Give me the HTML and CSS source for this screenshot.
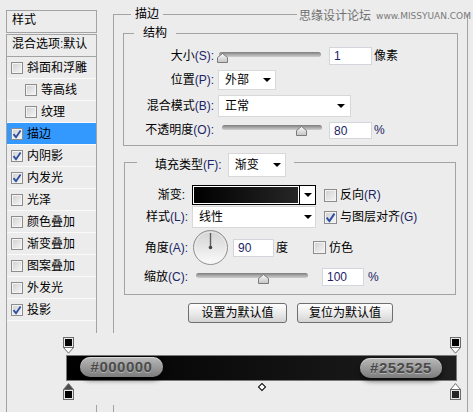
FILE: index.html
```html
<!DOCTYPE html>
<html lang="zh">
<head>
<meta charset="utf-8">
<title>图层样式 - 描边</title>
<link rel="stylesheet" href="styles.css">
</head>
<body>
<div class="app">
  <aside class="sidebar">
    <div class="side-head">样式</div>
    <ul class="side-list">
      <li class="opt">混合选项<span class="k">:</span>默认</li>
      <li><span class="cb"></span>斜面和浮雕</li>
      <li class="sub"><span class="cb"></span>等高线</li>
      <li class="sub"><span class="cb"></span>纹理</li>
      <li class="active"><span class="cb on"><svg width="10" height="10" viewBox="0 0 10 10"><path d="M1.5 5.2 L4 8.2 L8.6 1.5" fill="none" stroke="#2d4fa3" stroke-width="1.8"/></svg></span>描边</li>
      <li><span class="cb on"><svg width="10" height="10" viewBox="0 0 10 10"><path d="M1.5 5.2 L4 8.2 L8.6 1.5" fill="none" stroke="#2d4fa3" stroke-width="1.8"/></svg></span>内阴影</li>
      <li><span class="cb on"><svg width="10" height="10" viewBox="0 0 10 10"><path d="M1.5 5.2 L4 8.2 L8.6 1.5" fill="none" stroke="#2d4fa3" stroke-width="1.8"/></svg></span>内发光</li>
      <li><span class="cb"></span>光泽</li>
      <li><span class="cb"></span>颜色叠加</li>
      <li><span class="cb"></span>渐变叠加</li>
      <li><span class="cb"></span>图案叠加</li>
      <li><span class="cb"></span>外发光</li>
      <li><span class="cb on"><svg width="10" height="10" viewBox="0 0 10 10"><path d="M1.5 5.2 L4 8.2 L8.6 1.5" fill="none" stroke="#2d4fa3" stroke-width="1.8"/></svg></span>投影</li>
    </ul>
  </aside>

  <main class="main">
    <fieldset class="outer">
      <legend>描边</legend>

      <fieldset class="struct">
        <legend>结构</legend>
        <div class="row r1">
          <span class="lbl">大小<span class="k">(S):</span></span>
          <div class="slider s-size">
            <div class="track"></div>
            <svg class="thumb" style="left:-1px" width="11" height="10" viewBox="0 0 11 10"><defs><linearGradient id="tg1" x1="0" y1="0" x2="0" y2="1"><stop offset="0" stop-color="#fbfbfb"/><stop offset="1" stop-color="#c4c4c4"/></linearGradient></defs><path d="M0.5 9.5 V4.5 L5.5 0.5 L10.5 4.5 V9.5 Z" fill="url(#tg1)" stroke="#7b7b7b"/></svg>
          </div>
          <div class="num">1</div>
          <span class="unit">像素</span>
        </div>
        <div class="row r2">
          <span class="lbl">位置<span class="k">(P):</span></span>
          <div class="dd dd-pos">外部</div>
        </div>
        <div class="row r3">
          <span class="lbl">混合模式<span class="k">(B):</span></span>
          <div class="dd dd-blend">正常</div>
        </div>
        <div class="row r4">
          <span class="lbl">不透明度<span class="k">(O):</span></span>
          <div class="slider s-opacity">
            <div class="track"></div>
            <svg class="thumb" style="left:74px" width="11" height="10" viewBox="0 0 11 10"><defs><linearGradient id="tg2" x1="0" y1="0" x2="0" y2="1"><stop offset="0" stop-color="#fbfbfb"/><stop offset="1" stop-color="#c4c4c4"/></linearGradient></defs><path d="M0.5 9.5 V4.5 L5.5 0.5 L10.5 4.5 V9.5 Z" fill="url(#tg2)" stroke="#7b7b7b"/></svg>
          </div>
          <div class="num">80</div>
          <span class="unit k">%</span>
        </div>
      </fieldset>

      <fieldset class="fill">
        <legend><span class="lt">填充类型<span class="k">(F):</span></span><div class="dd dd-type">渐变</div></legend>
        <div class="row f1">
          <span class="lbl">渐变:</span>
          <div class="gswatch"><div class="gfill"></div><div class="garrow"></div></div>
          <span class="cb"></span><span class="cbl">反向<span class="k">(R)</span></span>
        </div>
        <div class="row f2">
          <span class="lbl">样式<span class="k">(L):</span></span>
          <div class="dd dd-style">线性</div>
          <span class="cb on"><svg width="11" height="11" viewBox="0 0 10 10"><path d="M1.5 5.2 L4 8.2 L8.6 1.5" fill="none" stroke="#2d4fa3" stroke-width="1.8"/></svg></span><span class="cbl">与图层对齐<span class="k">(G)</span></span>
        </div>
        <div class="row f3">
          <span class="lbl">角度<span class="k">(A):</span></span>
          <svg class="dial" width="35" height="35" viewBox="0 0 35 35"><defs><linearGradient id="dg" x1="0" y1="0" x2="0" y2="1"><stop offset="0" stop-color="#d2d2d2"/><stop offset="1" stop-color="#fbfbfb"/></linearGradient></defs><circle cx="17.5" cy="17.5" r="17" fill="url(#dg)" stroke="#8e8e8e"/><circle cx="17.5" cy="17.5" r="15.5" fill="none" stroke="#f4f4f4" stroke-opacity=".6"/><line x1="17.5" y1="17.5" x2="17.5" y2="3" stroke="#5c5c5c" stroke-width="1.4"/><circle cx="17.5" cy="17.5" r="1.8" fill="#474747"/></svg>
          <div class="num">90</div>
          <span class="unit">度</span>
          <span class="cb"></span><span class="cbl">仿色</span>
        </div>
        <div class="row f4">
          <span class="lbl">缩放<span class="k">(C):</span></span>
          <div class="slider s-scale">
            <div class="track"></div>
            <svg class="thumb" style="left:62px" width="11" height="10" viewBox="0 0 11 10"><defs><linearGradient id="tg3" x1="0" y1="0" x2="0" y2="1"><stop offset="0" stop-color="#fbfbfb"/><stop offset="1" stop-color="#c4c4c4"/></linearGradient></defs><path d="M0.5 9.5 V4.5 L5.5 0.5 L10.5 4.5 V9.5 Z" fill="url(#tg3)" stroke="#7b7b7b"/></svg>
          </div>
          <div class="num">100</div>
          <span class="unit k">%</span>
        </div>
      </fieldset>

      <div class="btns">
        <button class="btn btn-a" type="button">设置为默认值</button>
        <button class="btn btn-b" type="button">复位为默认值</button>
      </div>
    </fieldset>
  </main>
</div>

<div class="watermark"><span class="cn">思缘设计论坛</span><span class="url">www.MISSYUAN.COM</span></div>

<div class="grad-editor">
  <div class="gbar"></div>
  <svg class="stop st-l" width="11" height="17" viewBox="0 0 11 17"><path d="M0.5 10.5 L5.5 16.2 L10.5 10.5" fill="#fff" stroke="#6b6b6b"/><rect x="0.5" y="0.5" width="10" height="10" fill="#e6e6e6" stroke="#6b6b6b"/><rect x="2" y="2" width="7" height="7" fill="#000"/></svg>
  <svg class="stop st-r" width="11" height="17" viewBox="0 0 11 17"><path d="M0.5 10.5 L5.5 16.2 L10.5 10.5" fill="#fff" stroke="#6b6b6b"/><rect x="0.5" y="0.5" width="10" height="10" fill="#e6e6e6" stroke="#6b6b6b"/><rect x="2" y="2" width="7" height="7" fill="#000"/></svg>
  <svg class="stop sb-l" width="11" height="17" viewBox="0 0 11 17"><path d="M0.5 6.5 L5.5 0.6 L10.5 6.5 Z" fill="#4a4a4a" stroke="#6b6b6b"/><rect x="0.5" y="6.5" width="10" height="10" fill="#e6e6e6" stroke="#6b6b6b"/><rect x="2" y="8" width="7" height="7" fill="#000"/></svg>
  <svg class="stop sb-r" width="11" height="17" viewBox="0 0 11 17"><path d="M0.5 6.5 L5.5 0.6 L10.5 6.5 Z" fill="#fff" stroke="#6b6b6b"/><rect x="0.5" y="6.5" width="10" height="10" fill="#e6e6e6" stroke="#6b6b6b"/><rect x="2" y="8" width="7" height="7" fill="#252525"/></svg>
  <div class="pill pill-l">#000000</div>
  <div class="pill pill-r">#252525</div>
  <div class="mid"></div>
</div>
</body>
</html>
```

FILE: styles.css
```css
* { box-sizing: border-box; }
html, body { margin: 0; padding: 0; }
body {
  width: 473px;
  height: 412px;
  overflow: hidden;
  position: relative;
  background: #ececec;
  color: #000;
  font: 12px/14px "Liberation Sans", "Noto Sans CJK SC", sans-serif;
}
.k { color: #1b2466; }

.app { display: flex; align-items: flex-start; }

/* ---------- sidebar ---------- */
.sidebar { flex: none; width: 91px; margin: 10px 0 0 6px; }
.side-head {
  height: 23px;
  border: 1px solid #a3a3a3;
  padding: 2px 0 0 5px;
}
.side-list {
  list-style: none;
  margin: 1px 0 0;
  padding: 0;
  height: 378px;
  border: 1px solid #a3a3a3;
  border-bottom: 0;
}
.side-list li {
  display: flex;
  align-items: center;
  height: 22px;
  padding-left: 4px;
  border-bottom: 1px solid #fafafa;
  white-space: nowrap;
}
.side-list li.opt { padding: 0 0 3px 5px; border-bottom-color: #a3a3a3; }
.side-list li.sub { padding-left: 18px; }
.side-list li.active { background: #3399ff; }
.side-list .cb { margin-right: 4px; }

.cb {
  flex: none;
  display: inline-flex;
  align-items: center;
  justify-content: center;
  width: 12px;
  height: 12px;
  border: 1px solid #8d8d8d;
  background: linear-gradient(135deg, #cfcfcf, #f7f7f7);
  box-shadow: inset 0 0 0 1px #f3f3f3;
}
.cb svg { display: block; }

/* ---------- main ---------- */
.main { flex: none; width: 355px; margin: 7px 0 0 16px; }
fieldset { margin: 0; padding: 0; min-width: 0; border: 1px solid #a3a3a3; }
legend { padding: 0; line-height: 14px; }
.outer { height: 405px; border-bottom: 0; }
.outer > legend { margin-left: 17px; padding: 0 4px; }

.struct { margin: 5px 9px 0; padding: 0 0 6px; }
.struct > legend { margin-left: 10px; padding: 0 9px; }

.row { display: flex; align-items: center; white-space: nowrap; }
.lbl { flex: none; text-align: right; }
.struct .lbl { width: 90px; margin-right: 4px; }
.r1 { margin-top: 6px; height: 19px; }
.r2 { margin-top: 5px; height: 20px; }
.r3 { margin-top: 5px; height: 22px; }
.r4 { margin-top: 4px; height: 18px; }

.slider { position: relative; flex: none; align-self: stretch; }
.track {
  height: 5px;
  border-radius: 3px;
  background: linear-gradient(#7c7c7c, #a4a4a4 45%, #cecece);
}
.thumb { position: absolute; display: block; }
.s-size { width: 104px; padding: 6px 1px 0; }
.s-size .thumb { top: 7px; }
.s-opacity { width: 100px; margin-left: 4px; padding-top: 4px; }
.s-opacity .thumb { top: 5px; }
.s-scale { width: 112px; margin-left: 4px; padding-top: 5px; }
.s-scale .thumb { top: 6px; }

.num {
  flex: none;
  width: 43px;
  height: 18px;
  margin-left: 7px;
  padding-left: 4px;
  background: #fff;
  border: 1px solid #d3d7dd;
  line-height: 16px;
  color: #1b2466;
}
.r4 .num { height: 17px; }
.unit { margin-left: 2px; }

.dd {
  flex: none;
  display: flex;
  align-items: center;
  justify-content: space-between;
  background: #fff;
  border: 1px solid #d8d8d8;
  padding: 0 4px 0 6px;
}
.dd::after {
  content: "";
  width: 0;
  height: 0;
  border-style: solid;
  border-width: 4px 4px 0;
  border-color: #000 transparent transparent;
}
.dd-pos { width: 58px; height: 20px; }
.dd-blend { width: 133px; height: 22px; padding-right: 5px; }
.dd-type { width: 58px; height: 24px; margin-left: 6px; padding-right: 4px; }
.dd-style { width: 124px; height: 22px; padding-right: 3px; }

/* ---------- fill ---------- */
.fill { margin: 7px 11px 0 10px; padding: 0 0 8px; }
.fill > legend {
  margin-left: 12px;
  padding: 0 8px 0 18px;
  height: 19px;
  display: flex;
  align-items: flex-start;
}
.fill > legend .lt { padding-top: 5px; }
.fill .lbl { width: 63px; margin-right: 4px; }
.f1 .lbl { padding-right: 3px; }
.f1 { margin-top: 13px; height: 20px; }
.f2 { margin-top: 1px; height: 22px; }
.f3 { margin-top: 2px; height: 35px; }
.f4 { margin-top: 3px; height: 18px; }

.gswatch {
  flex: none;
  display: flex;
  width: 124px;
  height: 20px;
  border: 1px solid #000;
  background: #fff;
}
.gfill { flex: 1; border: 1px solid #fff; background: linear-gradient(90deg, #000, #262626); }
.garrow {
  width: 16px;
  border-left: 1px solid #000;
  display: flex;
  align-items: center;
  justify-content: center;
}
.garrow::after {
  content: "";
  width: 0;
  height: 0;
  border-style: solid;
  border-width: 4px 4px 0;
  border-color: #000 transparent transparent;
}
.fill .cb { width: 13px; height: 13px; margin-left: 8px; margin-right: 3px; }
.f3 .cb { margin-left: 25px; }
.dial { flex: none; display: block; margin-left: 1px; }
.f3 .num { margin-left: 5px; width: 41px; }
.f4 .num { margin-left: 14px; width: 42px; }
.f4 .unit { margin-left: 4px; }

.btns { display: flex; justify-content: center; gap: 10px; margin-top: 8px; }
.btn {
  height: 20px;
  padding: 0;
  border: 1px solid #6f6f6f;
  border-radius: 3px;
  background: linear-gradient(#fefefe, #ebebeb 50%, #d4d4d4);
  font: 12px/18px "Liberation Sans", "Noto Sans CJK SC", sans-serif;
  color: #000;
}
.btn-a { width: 99px; }
.btn-b { width: 96px; }

/* ---------- watermark ---------- */
.watermark {
  position: absolute;
  top: 8px;
  left: 297px;
  width: 170px;
  display: flex;
  align-items: center;
  white-space: nowrap;
  padding: 0 0 0 2px;
  background: #ececec;
  color: #707070;
  font-size: 12px;
  line-height: 16px;
}
.watermark .cn { flex: none; }
.watermark .url {
  flex: none;
  margin-left: 5px;
  font: 9px/16px "DejaVu Sans", sans-serif;
  color: #7a7a7a;
}

/* ---------- gradient editor overlay ---------- */
.grad-editor {
  position: absolute;
  left: 20px;
  top: 333px;
  width: 442px;
  height: 72px;
  background: #ececec;
}
.gbar {
  position: absolute;
  left: 46px;
  top: 22px;
  width: 391px;
  height: 26px;
  border: 1px solid #7a7a7a;
  background: linear-gradient(90deg, #000, #1f1f1f);
}
.stop { position: absolute; display: block; }
.st-l { left: 43px; top: 4px; }
.st-r { left: 430px; top: 4px; }
.sb-l { left: 43px; top: 50px; }
.sb-r { left: 430px; top: 50px; }
.pill {
  position: absolute;
  height: 20px;
  border-radius: 10px;
  background: linear-gradient(#b9b9b9, #989898 55%, #7c7c7c);
  box-shadow: 0 3px 5px rgba(0, 0, 0, .6), inset 0 1px 0 rgba(255, 255, 255, .45);
  color: #4b4b4b;
  font: bold 15px/20px "Liberation Sans", sans-serif;
  letter-spacing: .5px;
  text-align: center;
  text-shadow: 0 1px 0 rgba(255, 255, 255, .35);
}
.pill-l { left: 60px; top: 24px; width: 83px; }
.pill-r { left: 340px; top: 25px; width: 82px; }
.mid {
  position: absolute;
  left: 239px;
  top: 51px;
  width: 6px;
  height: 6px;
  border: 1px solid #000;
  background: #fff;
  transform: rotate(45deg);
}
```
